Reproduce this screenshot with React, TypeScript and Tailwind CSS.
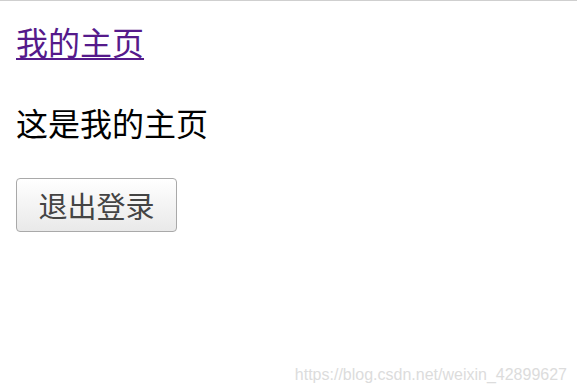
export default function App() {
  return (
    <div className="relative h-[392px] w-[577px] overflow-hidden border-t border-[#cfcfcf] bg-white font-['Noto_Sans_CJK_SC',sans-serif]">
      <div className="flex flex-col items-start px-4">
        <a href="#" className="mt-[20px] text-[32px] leading-[40px] text-[#551a8b] underline decoration-[2px] underline-offset-[3px]">
          我的主页
        </a>
        <p className="mt-[41px] text-[32px] leading-[40px] text-black">这是我的主页</p>
        <button className="mt-[36px] h-[54px] w-[161px] rounded-[4px] border border-[#a9a9a9] bg-gradient-to-b from-white to-[#e9e9e9] text-[29px] leading-none text-[#444]">
          退出登录
        </button>
      </div>
      <div className="absolute bottom-[9px] right-[10px] font-['Liberation_Sans',sans-serif] text-[16px] leading-none text-[#dcdcdc]">
        https://blog.csdn.net/weixin_42899627
      </div>
    </div>
  );
}
